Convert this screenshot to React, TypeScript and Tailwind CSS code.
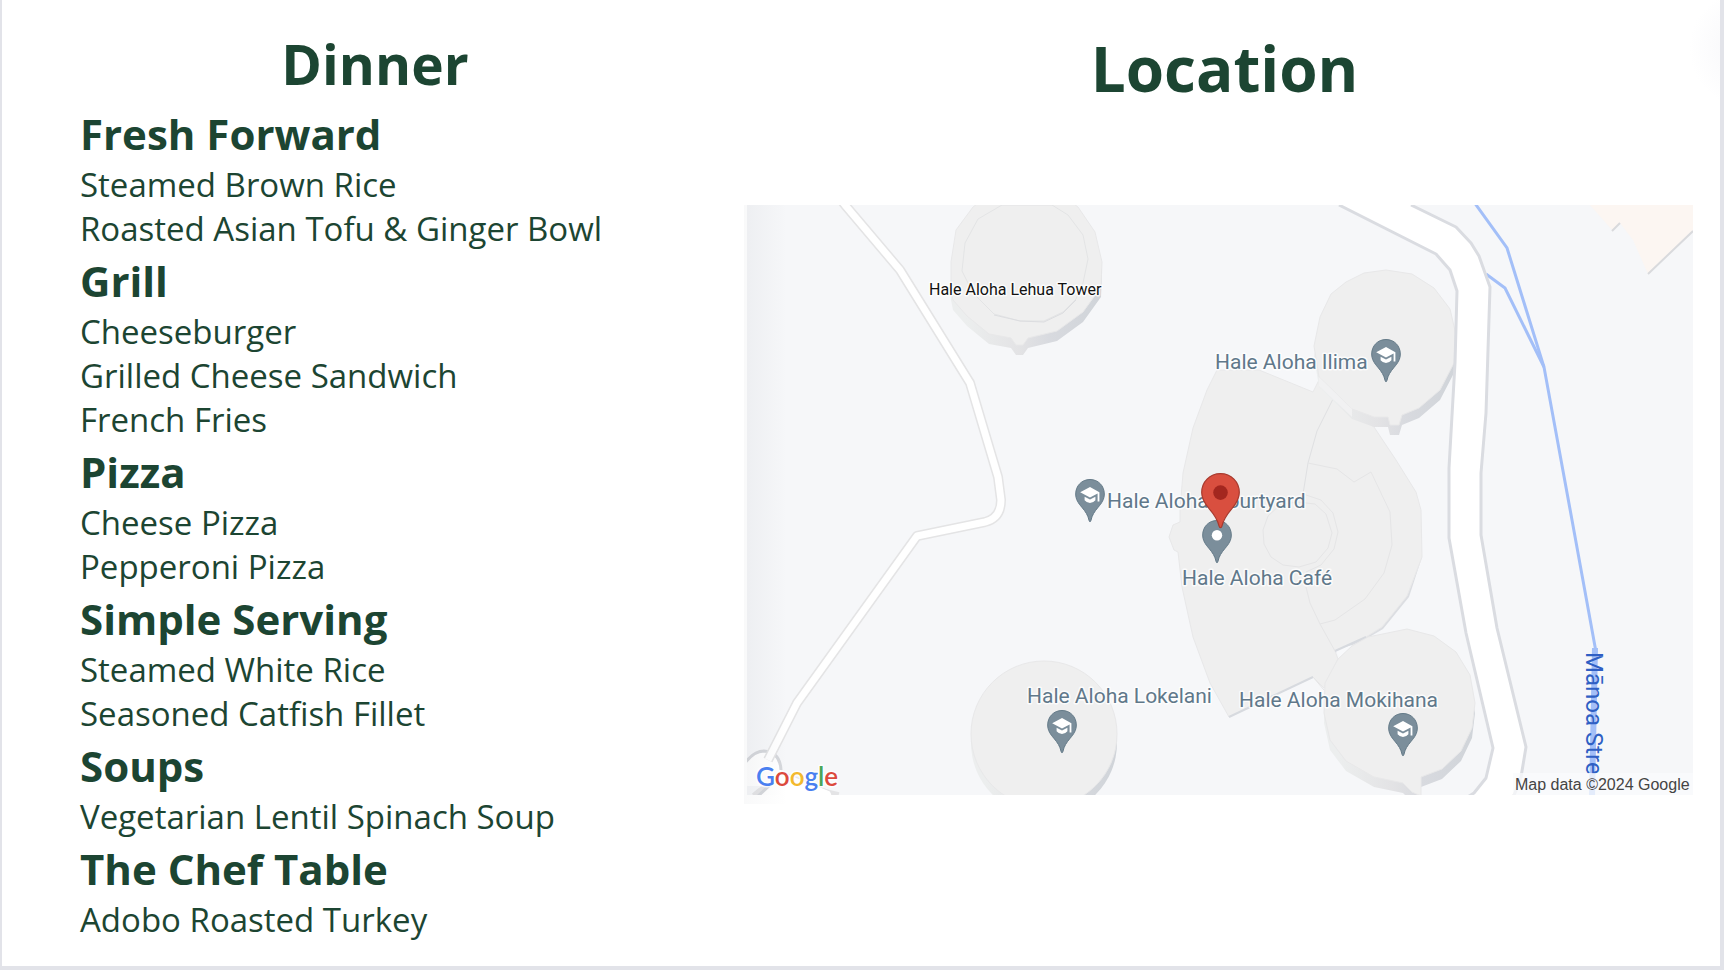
type Section = { title: string; items: string[] };

const menu: Section[] = [
  { title: "Fresh Forward", items: ["Steamed Brown Rice", "Roasted Asian Tofu & Ginger Bowl"] },
  { title: "Grill", items: ["Cheeseburger", "Grilled Cheese Sandwich", "French Fries"] },
  { title: "Pizza", items: ["Cheese Pizza", "Pepperoni Pizza"] },
  { title: "Simple Serving", items: ["Steamed White Rice", "Seasoned Catfish Fillet"] },
  { title: "Soups", items: ["Vegetarian Lentil Spinach Soup"] },
  { title: "The Chef Table", items: ["Adobo Roasted Turkey"] },
];

const lehua =
  "973,207 956,230 951,262 951,290 953,300 967,316 989,334 1011,338 1016,345 1023,345 1028,338 1057,331 1083,312 1101,287 1102,262 1095,232 1078,207 1066,198 985,198";
const lehuaRing =
  "1002,205 978,219 965,243 962,271 973,293 994,314 1020,321 1044,321 1063,312 1076,299 1083,283 1088,259 1083,235 1068,215 1052,205";
const ilima =
  "1386,270 1412,274 1434,288 1450,309 1456,335 1454,363 1440,390 1419,408 1402,415 1399,425 1390,425 1388,417 1374,417 1352,409 1319,377 1314,346 1320,317 1331,294 1346,282 1364,273";
const mokihana =
  "1407,629 1434,636 1456,652 1470,675 1475,703 1472,728 1461,751 1442,769 1421,777 1421,796 1412,792 1403,783 1374,777 1346,761 1330,740 1324,713 1325,683 1338,659 1352,646 1368,637";
const hall =
  "1217,370 1259,370 1313,392 1319,380 1334,396 1374,427 1396,460 1416,492 1421,510 1422,557 1407,596 1382,627 1366,637 1335,651 1338,659 1324,688 1313,677 1229,717 1210,683 1193,637 1182,587 1178,552 1174,550 1169,537 1173,525 1180,522 1180,510 1183,473 1193,428 1207,390";
const hallShade =
  "1422,557 1407,596 1382,627 1366,637 1335,651 1335,653 1366,639 1383,629 1409,597";
const roadLeft = "1339,205 1436,254 1450,270 1457,291 1455,363 1449,468 1449,538 1466,633 1493,748 1486,778 1474,793 1466,798";
const roadRight = "1411,205 1456,227 1471,243 1479,256 1490,287 1486,413 1481,473 1481,535 1497,628 1526,747 1521,777 1513,798";
const road =
  "1339,205 1436,254 1450,270 1457,291 1455,363 1449,468 1449,538 1466,633 1493,748 1486,778 1474,793 1466,798 1513,798 1521,777 1526,747 1497,628 1481,535 1481,473 1486,413 1490,287 1479,256 1471,243 1456,227 1411,205";
const lane =
  "M842 201 L845 205 L900 270 L970 383 L998 477 L1001 500 Q1001 518 985 522 L917 536 L797 703 L768 760";

function Tower({ points }: { points: string }) {
  return (
    <g>
      <polygon points={points} fill="url(#side)" transform="translate(0 10)" />
      <polygon points={points} fill="#efefef" stroke="#e8e8e9" strokeWidth="1" />
    </g>
  );
}

function GreyPin({ x, y, cafe = false }: { x: number; y: number; cafe?: boolean }) {
  return (
    <g transform={`translate(${x} ${y})`}>
      <path
        d="M0 .5 C-8.2 .5 -14.3 6.8 -14.3 15 C-14.3 20.5 -11.6 24.2 -8.2 28.2 C-4.4 32.6 -2 36.4 -1 41.2 C-.7 43.2 .7 43.2 1 41.2 C2 36.4 4.4 32.6 8.2 28.2 C11.6 24.2 14.3 20.5 14.3 15 C14.3 6.8 8.2 .5 0 .5 Z"
        fill="#7b8e9b"
        stroke="#647a88"
        strokeWidth="1"
      />
      {cafe ? (
        <circle cy="15.3" r="5.2" fill="#fff" />
      ) : (
        <g fill="#fff">
          <path d="M0 8 L-9.8 13.2 L0 18.6 L7.6 14.4 V22.5 H9.4 V13.2 Z" />
          <path d="M-5.4 17.7 L0 20.6 L5.4 17.7 V21.2 Q3 24 0 24 Q-3 24 -5.4 21.2 Z" />
        </g>
      )}
    </g>
  );
}

function CampusMap() {
  return (
    <svg viewBox="744 204 949 600" role="img" aria-label="Map of Hale Aloha Café" className="block h-auto w-full">
      <defs>
        <linearGradient id="side" x1="0" x2="1" y1="0" y2="0">
          <stop offset="0.1" stopColor="#eceeee" />
          <stop offset="0.45" stopColor="#e3e3e5" />
          <stop offset="0.65" stopColor="#d8dadf" />
          <stop offset="1" stopColor="#d0d4d9" />
        </linearGradient>
        <linearGradient id="edge" x1="0" x2="1" y1="0" y2="0">
          <stop offset="0" stopColor="#6b7280" stopOpacity="0.06" />
          <stop offset="1" stopColor="#6b7280" stopOpacity="0" />
        </linearGradient>
        <clipPath id="frame">
          <rect x="747" y="205" width="946" height="590" />
        </clipPath>
      </defs>

      <rect x="744" y="205" width="44" height="599" fill="url(#edge)" opacity="0.7" />
      <g clipPath="url(#frame)">
        <rect x="747" y="205" width="946" height="590" fill="#f6f7f9" />

        <path d="M1590 205 L1613 231 L1620 223 L1633 240 L1648 274 L1693 232 V205 Z" fill="#fcf6f2" />
        <path d="M1612 231 L1620 223 M1648 274 L1693 231" stroke="#d9dadd" strokeWidth="2" fill="none" />

        <Tower points={lehua} />
        <polygon points={lehuaRing} fill="none" stroke="#e3e4e5" strokeWidth="1" />
        <path d="M994 315 L1020 321 L1044 322 L1063 313 L1076 300" fill="none" stroke="#dcdde0" strokeWidth="1" />

        <polygon points={hallShade} fill="#dcdee2" />
        <polygon points={hall} fill="#efefef" stroke="#e8e8e9" strokeWidth="1" />
        <path d="M1335 650 L1352 645 L1340 657 Z" fill="#f8f9fb" />
        <path d="M1229 717 L1313 677 M1335 651 L1366 637" stroke="#d7dadf" strokeWidth="2" fill="none" />
        <g fill="none" stroke="#e5e5e6" strokeWidth="1">
          <path d="M1334 397 L1317 431 L1308 463 L1303 494" stroke="#dfe0e2" />
          <path d="M1308 463 L1337 469 L1354 482 L1371 472 L1390 512 L1392 545 L1384 573 L1365 599 L1335 620 L1320 624" />
          <path d="M1306 587 L1310 603 L1320 624 L1335 651 M1313 677 L1324 690" />
          <path d="M1297 502 L1315 504 L1326 514 L1332 533 L1328 548 L1316 562 L1299 567 L1283 565 L1271 557 L1264 544 L1263 530 L1268 516 L1280 505 Z" />
          <path d="M1303 494 L1321 500 L1333 513 L1338 532 L1334 549 L1321 565 L1306 572" />
        </g>

        <Tower points={ilima} />
        <path d="M1319 377 L1352 409 V417 L1319 386 Z" fill="#f1f1f2" />
        <Tower points={mokihana} />
        <circle cx="1044" cy="743" r="73" fill="url(#side)" />
        <circle cx="1044" cy="734" r="73" fill="#efefef" stroke="#e8e8e9" strokeWidth="1" />

        <g fill="none" stroke="#a3bff8" strokeWidth="3">
          <path d="M1474 202 L1507 248 L1544 367 L1572 520 L1596 652" />
          <path d="M1486 274 L1505 288 L1544 367" />
          <path d="M1595 648 L1592 797" strokeWidth="6" />
        </g>

        <polygon points={road} fill="#fff" />
        <g fill="none" stroke="#dadce1" strokeWidth="3" strokeLinejoin="round">
          <polyline points={roadLeft} />
          <polyline points={roadRight} />
        </g>

        <path d="M756 798 Q776 779 800 789 L838 798" fill="none" stroke="#e4e4e6" strokeWidth="12" />
        <path d="M738 770 Q750 751 764 751 Q779 752 781 767 Q781 772 785 774 L830 791 L832 797 L756 797 L768 786 L738 786 Z" fill="#fff" />
        <path d="M745 763 Q754 751 764 751 Q780 752 781 770 M757 797 L770 785" fill="none" stroke="#d5d7db" strokeWidth="3" />
        <path d="M781 771 L830 791 L835 797" fill="none" stroke="#e4e4e6" strokeWidth="1" />
        <path d={lane} fill="none" stroke="#e4e4e5" strokeWidth="10" strokeLinejoin="round" />
        <path d={lane} fill="none" stroke="#fff" strokeWidth="7" strokeLinejoin="round" />

        <rect x="747" y="205" width="40" height="590" fill="url(#edge)" />

      </g>
      <text
        transform="translate(1586 652) rotate(90)"
        fill="#2f5fc4"
        className="font-['Roboto',sans-serif] text-[24px]"
      >
        Mānoa Stre
      </text>
      <rect x="1513" y="773" width="180" height="22" fill="#fafbfc" fillOpacity="0.75" />

      <g
        fill="#60788a"
        stroke="#fff"
        strokeOpacity="0.8"
        strokeWidth="3"
        strokeLinejoin="round"
        paintOrder="stroke"
        className="font-['Roboto',sans-serif] text-[21px]"
      >
        <text x="929" y="295" fill="#111" className="text-[16px]">Hale Aloha Lehua Tower</text>
        <text x="1215" y="369">Hale Aloha Ilima</text>
        <text x="1107" y="508">Hale Aloha Courtyard</text>
        <text x="1182" y="585">Hale Aloha Café</text>
        <text x="1027" y="703">Hale Aloha Lokelani</text>
        <text x="1239" y="707">Hale Aloha Mokihana</text>
      </g>
      <text x="1515" y="790" fill="#444" className="font-['Liberation_Sans',Arial,sans-serif] text-[16px]">
        Map data ©2024 Google
      </text>

      <GreyPin x={1386} y={339} />
      <GreyPin x={1090} y={479} />
      <GreyPin x={1062} y={710} />
      <GreyPin x={1403} y={713} />
      <GreyPin x={1217} y={520} cafe />

      <g transform="translate(1220.5 473)">
        <path
          d="M0 .6 C-10.8 .6 -18.8 9 -18.8 19.4 C-18.8 26 -15.6 30.6 -11.4 35.6 C-6.6 41.2 -3 46.4 -1.5 52.8 C-1 55.2 1 55.2 1.5 52.8 C3 46.4 6.6 41.2 11.4 35.6 C15.6 30.6 18.8 26 18.8 19.4 C18.8 9 10.8 .6 0 .6 Z"
          fill="#d94f3f"
          stroke="#a83a2e"
          strokeWidth="1.2"
        />
        <circle cy="19.6" r="7.3" fill="#a3271f" />
      </g>

      <text
        x="756"
        y="786"
        stroke="#fff"
        strokeOpacity="0.8"
        strokeWidth="3"
        strokeLinejoin="round"
        paintOrder="stroke"
        className="font-['Lato',sans-serif] text-[26px] font-semibold"
      >
        <tspan fill="#4a80f0">G</tspan>
        <tspan fill="#dc4a3d">o</tspan>
        <tspan fill="#f3b92e">o</tspan>
        <tspan fill="#4a80f0">g</tspan>
        <tspan fill="#4aa657">l</tspan>
        <tspan fill="#dc4a3d">e</tspan>
      </text>
    </svg>
  );
}

export default function App() {
  return (
    <div className="flex min-h-screen bg-[#e2e3e9] pr-1 pb-1 pl-[2px] font-['Open_Sans',sans-serif] text-[#1c4532]">
      <main className="grid w-full grid-cols-[742fr_976fr] bg-white">
        <section className="pt-8 pb-6">
          <h1 className="pl-1 text-center text-[55px] leading-[64px] font-bold">Dinner</h1>
          <div className="mt-2 pl-[78px]">
            {menu.map((section) => (
              <section key={section.title}>
                <h2 className="text-[42px] leading-[59px] font-bold">{section.title}</h2>
                <ul className="text-[33px] leading-[44px]">
                  {section.items.map((item) => (
                    <li key={item}>{item}</li>
                  ))}
                </ul>
              </section>
            ))}
          </div>
        </section>
        <section className="bg-[radial-gradient(circle_at_103%_5%,#f6f6f9_0,#ffffff_60px)] pt-9 pr-[27px]">
          <h1 className="pl-3 text-center text-[62px] leading-[64px] font-bold">Location</h1>
          <div className="mt-[104px]">
            <CampusMap />
          </div>
        </section>
      </main>
    </div>
  );
}
